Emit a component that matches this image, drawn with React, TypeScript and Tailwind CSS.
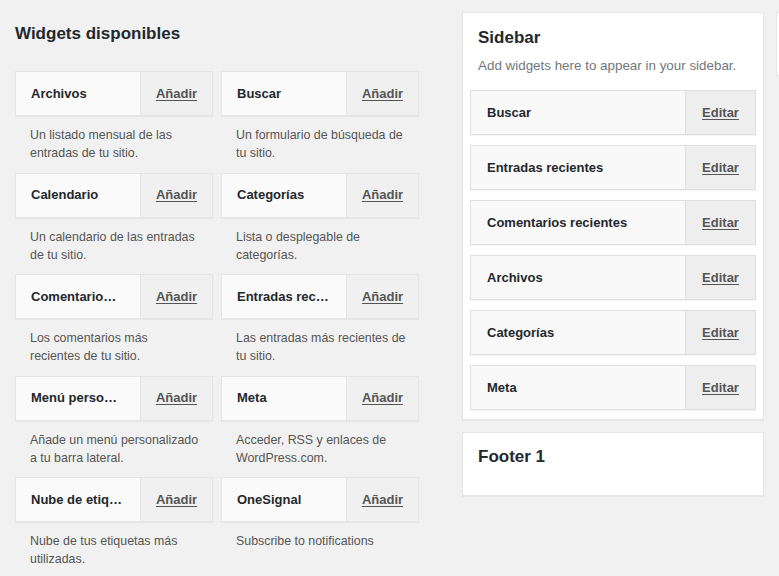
import React from "react";

const widgets: [string, string[]][] = [
  ["Archivos", ["Un listado mensual de las", "entradas de tu sitio."]],
  ["Buscar", ["Un formulario de búsqueda de", "tu sitio."]],
  ["Calendario", ["Un calendario de las entradas", "de tu sitio."]],
  ["Categorías", ["Lista o desplegable de", "categorías."]],
  ["Comentario…", ["Los comentarios más", "recientes de tu sitio."]],
  ["Entradas rec…", ["Las entradas más recientes de", "tu sitio."]],
  ["Menú perso…", ["Añade un menú personalizado", "a tu barra lateral."]],
  ["Meta", ["Acceder, RSS y enlaces de", "WordPress.com."]],
  ["Nube de etiq…", ["Nube de tus etiquetas más", "utilizadas."]],
  ["OneSignal", ["Subscribe to notifications"]],
];

const sidebarItems = [
  "Buscar",
  "Entradas recientes",
  "Comentarios recientes",
  "Archivos",
  "Categorías",
  "Meta",
];

export default function App() {
  return (
    <div
      className="w-[779px] h-[576px] overflow-hidden bg-[#f1f1f1] relative text-[#23282d]"
      style={{ fontFamily: '"Liberation Sans", Arial, sans-serif' }}
    >
      <div className="flex">
        {/* Left column */}
        <div className="w-[450px] pl-[15px] shrink-0">
          <h2 className="text-[17px] font-bold leading-[22px] mt-[23px] text-[#23282d]">
            Widgets disponibles
          </h2>
          <div className="grid grid-cols-[198px_198px] gap-x-[8px] mt-[26px]">
            {widgets.map(([name, desc]) => (
              <div key={name} className="h-[101.5px]">
                <div className="flex h-[45px] border border-[#e5e5e5] bg-[#fafafa] shadow-[0_1px_1px_rgba(0,0,0,0.04)]">
                  <div className="w-[124px] pl-[15px] flex items-center text-[13px] font-bold text-[#23282d] whitespace-nowrap overflow-hidden">
                    {name}
                  </div>
                  <div className="flex-1 border-l border-[#e5e5e5] bg-[#f0f0f0] flex items-center justify-center">
                    <span className="text-[13px] font-bold text-[#555] underline underline-offset-[2px]">
                      Añadir
                    </span>
                  </div>
                </div>
                <div className="mt-[10px] pl-[15px] text-[12.4px] leading-[18px] text-[#555] whitespace-nowrap">
                  {desc.map((line) => (
                    <p key={line}>{line}</p>
                  ))}
                </div>
              </div>
            ))}
          </div>
        </div>

        {/* Right column */}
        <div className="pl-[12px] pt-[12px] flex gap-[12px]">
          <div className="w-[302px] shrink-0 flex flex-col gap-[12px]">
            <div className="bg-white border border-[#e5e5e5] shadow-[0_1px_1px_rgba(0,0,0,0.04)] px-[7px] pb-[9px]">
              <h3 className="text-[17px] font-bold leading-[22px] mt-[14px] px-[8px] text-[#23282d]">
                Sidebar
              </h3>
              <p className="text-[13.4px] leading-[18px] text-[#72777c] px-[8px] mt-[8px] whitespace-nowrap">
                Add widgets here to appear in your sidebar.
              </p>
              <div className="mt-[15px] flex flex-col gap-[10px]">
                {sidebarItems.map((s) => (
                  <div
                    key={s}
                    className="flex h-[45px] border border-[#dfdfdf] bg-[#f9f9f9] shadow-[0_1px_1px_rgba(0,0,0,0.04)]"
                  >
                    <div className="flex-1 pl-[16px] flex items-center text-[13px] font-bold text-[#23282d]">
                      {s}
                    </div>
                    <div className="w-[70px] border-l border-[#dfdfdf] bg-[#eeeeee] flex items-center justify-center">
                      <span className="text-[13px] font-bold text-[#555] underline underline-offset-[2px]">
                        Editar
                      </span>
                    </div>
                  </div>
                ))}
              </div>
            </div>
            <div className="bg-white border border-[#e5e5e5] shadow-[0_1px_1px_rgba(0,0,0,0.04)] h-[64px] px-[15px]">
              <h3 className="text-[17px] font-bold leading-[22px] mt-[13px] text-[#23282d]">
                Footer 1
              </h3>
            </div>
          </div>
          <div className="w-[40px] h-[64px] bg-white border border-[#e5e5e5] shrink-0" />
        </div>
      </div>
    </div>
  );
}
